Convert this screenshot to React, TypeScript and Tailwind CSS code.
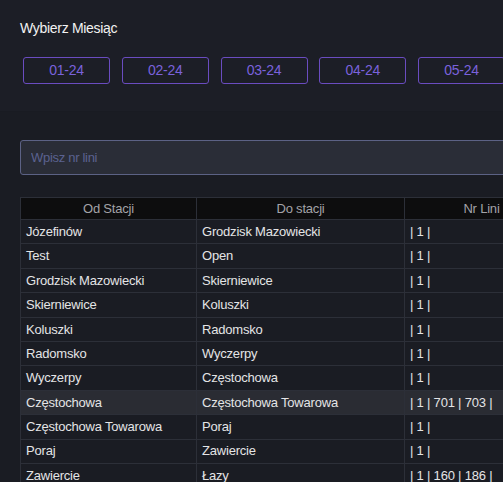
const MONTHS = ["01-24", "02-24", "03-24", "04-24", "05-24"];

const ROWS = [
  { from: "Józefinów", to: "Grodzisk Mazowiecki", nr: "| 1 |" },
  { from: "Test", to: "Open", nr: "| 1 |" },
  { from: "Grodzisk Mazowiecki", to: "Skierniewice", nr: "| 1 |" },
  { from: "Skierniewice", to: "Koluszki", nr: "| 1 |" },
  { from: "Koluszki", to: "Radomsko", nr: "| 1 |" },
  { from: "Radomsko", to: "Wyczerpy", nr: "| 1 |" },
  { from: "Wyczerpy", to: "Częstochowa", nr: "| 1 |" },
  { from: "Częstochowa", to: "Częstochowa Towarowa", nr: "| 1 | 701 | 703 |", hover: true },
  { from: "Częstochowa Towarowa", to: "Poraj", nr: "| 1 |" },
  { from: "Poraj", to: "Zawiercie", nr: "| 1 |" },
  { from: "Zawiercie", to: "Łazy", nr: "| 1 | 160 | 186 |" },
];

export default function App() {
  return (
    <div className="w-[503px] h-[482px] overflow-hidden bg-[#1a1c23] font-['Liberation_Sans',Arial,sans-serif]">
      <div className="w-[600px]">
        {/* Miesiące */}
        <section className="h-[112px] bg-[#1c1e26] pt-[18px] pl-5 border-b border-[#191b22]">
          <h2 className="text-[14px] leading-5 text-[#f2f2f2] tracking-[-0.3px]">Wybierz Miesiąc</h2>
          <div className="flex gap-[11.75px] mt-[19px] pl-[3px]">
            {MONTHS.map((m) => (
              <button
                key={m}
                className="w-[87px] h-[27px] shrink-0 rounded-[3px] border border-[#6a4cc0] text-[14px] text-[#7a62dc] tracking-[-0.3px]"
              >
                {m}
              </button>
            ))}
          </div>
        </section>

        {/* Szukaj */}
        <div className="pl-5 pt-[28px]">
          <input
            placeholder="Wpisz nr lini"
            className="w-[560px] h-[35px] rounded-[3px] border border-[#5c6285] bg-[#2a2d37] px-[10px] text-[13px] text-white placeholder:text-[#5b6290] outline-none tracking-[-0.3px]"
          />
        </div>

        {/* Tabela */}
        <div className="pl-5 pt-[22px]">
          <table className="border-collapse text-[13px] tracking-[-0.2px]">
            <thead>
              <tr className="h-[22px] bg-[#0d0d0e] text-[#a3a3a8]">
                <th className="w-[176px] border border-[#2c2f38] font-normal">Od Stacji</th>
                <th className="w-[208px] border border-[#2c2f38] font-normal">Do stacji</th>
                <th className="w-[154px] border border-[#2c2f38] font-normal">Nr Lini</th>
              </tr>
            </thead>
            <tbody>
              {ROWS.map((r) => (
                <tr key={r.from} className={`h-[24.4px] text-[#e4e4e6] ${r.hover ? "bg-[#2a2c33]" : ""}`}>
                  <td className="border border-[#2c2f38] px-[5px] whitespace-nowrap">{r.from}</td>
                  <td className="border border-[#2c2f38] px-[5px] whitespace-nowrap">{r.to}</td>
                  <td className="border border-[#2c2f38] px-[5px] whitespace-nowrap">{r.nr}</td>
                </tr>
              ))}
            </tbody>
          </table>
        </div>
      </div>
    </div>
  );
}
